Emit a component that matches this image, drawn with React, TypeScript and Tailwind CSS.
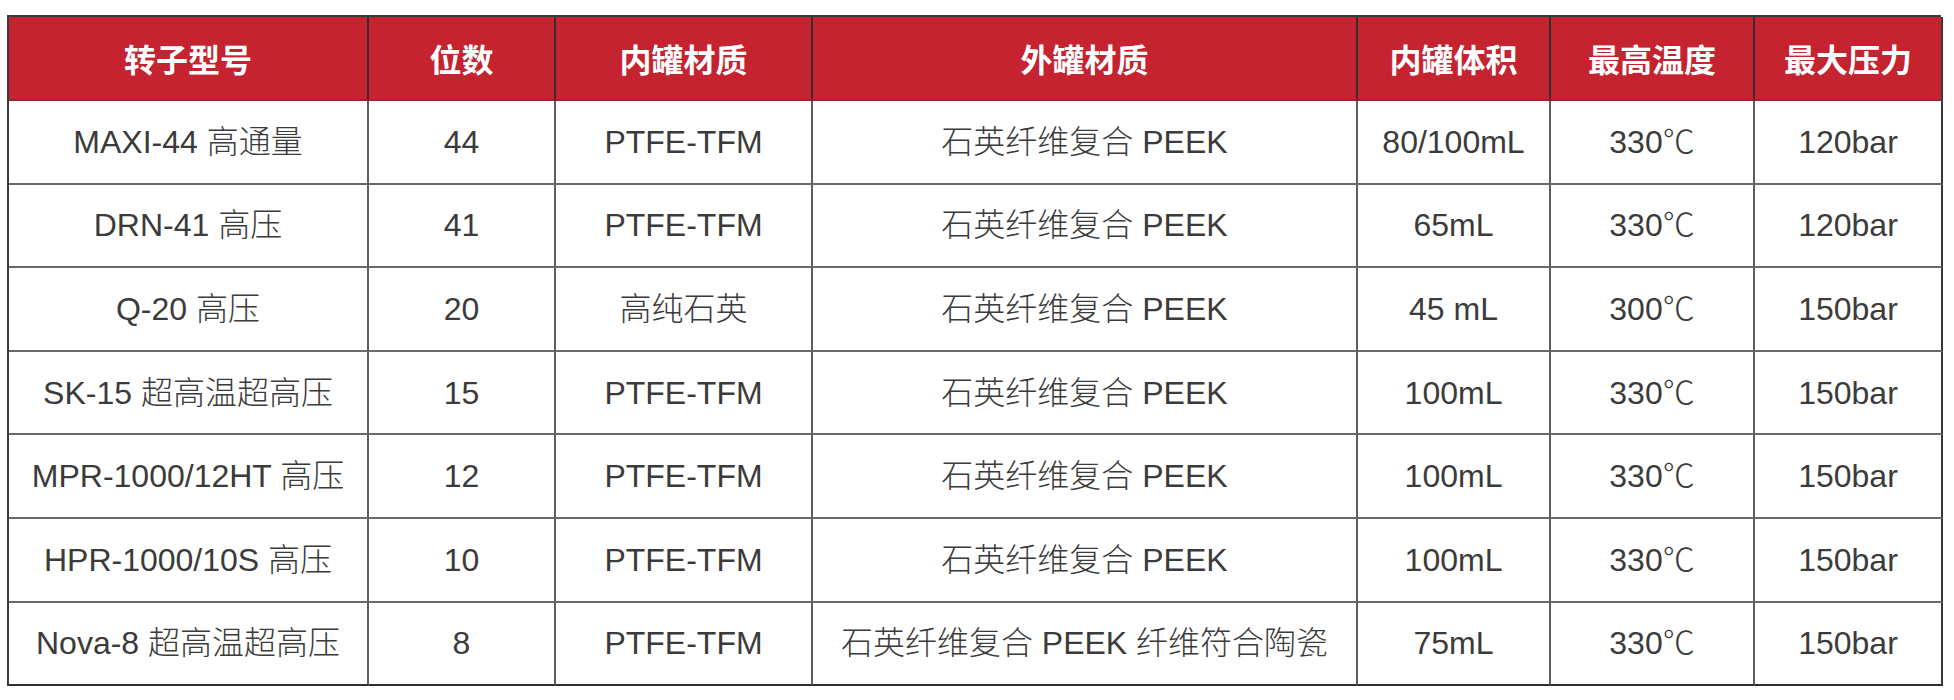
import React from "react";

const headers = ["转子型号", "位数", "内罐材质", "外罐材质", "内罐体积", "最高温度", "最大压力"];

const rows: string[][] = [
  ["MAXI-44 高通量", "44", "PTFE-TFM", "石英纤维复合 PEEK", "80/100mL", "330℃", "120bar"],
  ["DRN-41 高压", "41", "PTFE-TFM", "石英纤维复合 PEEK", "65mL", "330℃", "120bar"],
  ["Q-20 高压", "20", "高纯石英", "石英纤维复合 PEEK", "45 mL", "300℃", "150bar"],
  ["SK-15 超高温超高压", "15", "PTFE-TFM", "石英纤维复合 PEEK", "100mL", "330℃", "150bar"],
  ["MPR-1000/12HT 高压", "12", "PTFE-TFM", "石英纤维复合 PEEK", "100mL", "330℃", "150bar"],
  ["HPR-1000/10S 高压", "10", "PTFE-TFM", "石英纤维复合 PEEK", "100mL", "330℃", "150bar"],
  ["Nova-8 超高温超高压", "8", "PTFE-TFM", "石英纤维复合 PEEK 纤维符合陶瓷", "75mL", "330℃", "150bar"],
];

export default function App() {
  return (
    <div className="w-[1954px] h-[700px] bg-white pt-[15px] pl-[7px]">
      <div
        className="grid grid-cols-[360px_187px_257px_545px_193px_204px_188px] w-[1934px] border-l-2 border-t-2 border-[#3a3a3a]"
        style={{ fontFamily: '"Liberation Sans", "Noto Sans CJK SC", sans-serif' }}
      >
        {headers.map((h, i) => (
          <div
            key={h}
            className={`h-[84px] bg-[#c4232f] text-white text-[32px] font-bold flex items-center justify-center border-b-2 border-b-[#8a3039] ${
              i < headers.length - 1 ? "border-r-2 border-r-[#3a2c2e]" : "border-r-2 border-r-[#3a3a3a]"
            }`}
            style={{ fontFamily: '"Noto Sans CJK SC", sans-serif' }}
          >
            {h}
          </div>
        ))}
        {rows.map((r, ri) =>
          r.map((c, ci) => (
            <div
              key={`${ri}-${ci}`}
              className={`h-[83.6px] flex items-center justify-center text-[32px] font-light text-[#3b3b3b] whitespace-nowrap border-r-2 ${
                ci === r.length - 1 ? "border-r-[#3a3a3a]" : "border-r-[#5e5e5e]"
              } ${ri === rows.length - 1 ? "border-b-2 border-b-[#2e2e2e]" : "border-b-2 border-b-[#6a6a6a]"}`}
            >
              {c}
            </div>
          ))
        )}
      </div>
    </div>
  );
}
